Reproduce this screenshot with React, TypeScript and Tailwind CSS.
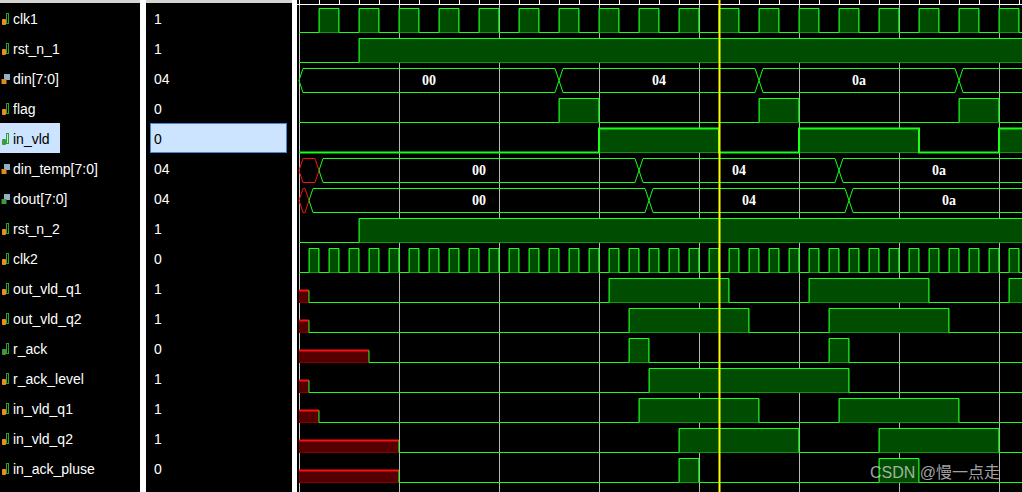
import React from "react";

type Row = {
  name: string;
  value: string;
  bus?: boolean;
  highs?: number[][];
  red?: number;
  redHex?: number;
  cuts?: number[];
  labels?: string[];
  thick?: boolean;
};

const clk = (start: number, period: number, w: number) => {
  const out: number[][] = [];
  for (let x = start; x < 1030; x += period) out.push([x, x + w]);
  return out;
};

const rows: Row[] = [
  { name: "clk1", value: "1", highs: clk(319, 40, 20) },
  { name: "rst_n_1", value: "1", highs: [[359, 1030]] },
  { name: "din[7:0]", value: "04", bus: true, cuts: [299, 559, 759, 959, 1060], labels: ["00", "04", "0a", ""] },
  { name: "flag", value: "0", highs: [[559, 599], [759, 799], [959, 999]] },
  { name: "in_vld", value: "0", highs: [[599, 719], [799, 919], [999, 1030]], thick: true },
  { name: "din_temp[7:0]", value: "04", bus: true, redHex: 319, cuts: [319, 639, 839, 1039], labels: ["00", "04", "0a"] },
  { name: "dout[7:0]", value: "04", bus: true, redHex: 309, cuts: [309, 649, 849, 1049], labels: ["00", "04", "0a"] },
  { name: "rst_n_2", value: "1", highs: [[359, 1030]] },
  { name: "clk2", value: "0", highs: clk(309, 20, 10) },
  { name: "out_vld_q1", value: "1", red: 309, highs: [[609, 729], [809, 929], [1009, 1030]] },
  { name: "out_vld_q2", value: "1", red: 309, highs: [[629, 749], [829, 949]] },
  { name: "r_ack", value: "0", red: 369, highs: [[629, 649], [829, 849]] },
  { name: "r_ack_level", value: "1", red: 309, highs: [[649, 849]] },
  { name: "in_vld_q1", value: "1", red: 319, highs: [[639, 759], [839, 959]] },
  { name: "in_vld_q2", value: "1", red: 399, highs: [[679, 799], [879, 999]] },
  { name: "in_ack_pluse", value: "0", red: 399, highs: [[679, 699], [879, 919]] },
];

const G = "#19ff19";

const SigIcon = ({ bus, green }: { bus?: boolean; green?: boolean }) => (
  <svg width="10" height="14" viewBox="0 0 10 14" className="shrink-0">
    {bus ? (
      <>
        <rect x="3" y="2" width="6" height="6" fill="#8fb0c8" />
        <rect x="0.5" y="7" width="5" height="5" fill={green ? "#3f9a3f" : "#e08a1c"} />
      </>
    ) : (
      <>
        <rect x="5.5" y="1.5" width="2" height="10" fill="none" stroke="#2aa52a" />
        <rect x="1" y="7" width="4" height="6" rx="1" fill={green ? "#3f9a3f" : "#e8901c"} />
      </>
    )}
  </svg>
);

const BitWave = ({ r, i }: { r: Row; i: number }) => {
  const hi = 8.5 + 30 * i;
  const lo = 32.5 + 30 * i;
  const mid = 20.5 + 30 * i;
  const start = r.red ?? 299;
  let d = `M${start} ${r.red ? mid : lo}`;
  if (r.red) d += ` L${start} ${lo}`;
  for (const [a, b] of r.highs ?? []) {
    d += ` L${a} ${lo} L${a} ${hi} L${b} ${hi} L${b} ${lo}`;
  }
  d += ` L1030 ${lo}`;
  return (
    <g>
      {r.red && (
        <>
          <rect x={299.5} y={mid} width={start - 300} height={lo - mid} fill="#550000" stroke="#8a0000" />
          <line x1={299} y1={mid} x2={start} y2={mid} stroke="#ff1010" strokeWidth={2} />
        </>
      )}
      {(r.highs ?? []).map(([a, b], k) => (
        <rect key={k} x={a + 0.5} y={hi} width={b - a - 1} height={lo - hi} fill="#004c00" stroke="#0a9a0a" />
      ))}
      <path d={d} fill="none" stroke={G} strokeWidth={r.thick ? 2 : 1} />
    </g>
  );
};

const BusWave = ({ r, i }: { r: Row; i: number }) => {
  const hi = 8.5 + 30 * i;
  const lo = 32.5 + 30 * i;
  const mid = 20.5 + 30 * i;
  const cuts = r.cuts ?? [];
  const hex = (a: number, b: number) =>
    `M${a} ${mid} L${a + 4} ${hi} L${b - 4} ${hi} L${b} ${mid} L${b - 4} ${lo} L${a + 4} ${lo} Z`;
  return (
    <g>
      {r.redHex && <path d={hex(299, r.redHex)} fill="none" stroke="#ff1010" />}
      {cuts.slice(0, -1).map((a, k) => (
        <g key={k}>
          <path d={hex(a, cuts[k + 1])} fill="none" stroke={G} />
          {r.labels?.[k] && (
            <text
              x={(a + cuts[k + 1]) / 2}
              y={mid + 4.5}
              textAnchor="middle"
              fill="#ffffff"
              fontSize="14"
              fontWeight="bold"
              fontFamily="'Liberation Serif', 'DejaVu Serif', serif"
            >
              {r.labels[k]}
            </text>
          )}
        </g>
      ))}
    </g>
  );
};

const Waves = () => {
  const ticks: number[] = [];
  for (let x = 299; x < 1022; x += 20) ticks.push(x);
  const grid = [399, 499, 599, 699, 799, 899, 999];
  return (
    <svg width="725" height="492" viewBox="297 0 725 492" className="block">
      <rect x="297" y="0" width="725" height="492" fill="#000" />
      <line x1="297" y1="4.5" x2="1022" y2="4.5" stroke="#ffffff" />
      {ticks.map((x) => (
        <line key={x} x1={x + 0.5} y1="0" x2={x + 0.5} y2="4" stroke="#ffffff" />
      ))}
      <line x1="299.5" y1="5" x2="299.5" y2="492" stroke="#c8c8c8" />
      {grid.map((x) => (
        <line key={x} x1={x + 0.5} y1="5" x2={x + 0.5} y2="492" stroke="#b8b8b8" />
      ))}
      {rows.map((r, i) => (r.bus ? <BusWave key={i} r={r} i={i} /> : <BitWave key={i} r={r} i={i} />))}
      <rect x="718.5" y="0" width="2" height="492" fill="#ffff00" />
    </svg>
  );
};

export default function App() {
  return (
    <div className="relative w-[1022px] h-[492px] overflow-hidden bg-black flex font-['Liberation_Sans',Arial,sans-serif] text-[14px] text-white">
      {/* names */}
      <div className="w-[140px] flex flex-col">
        <div className="h-[3px] bg-[#d4d4d4]" />
        {rows.map((r, i) => (
          <div key={r.name} className="h-[30px] flex items-center pt-[2px]">
            <div
              className={
                r.thick
                  ? "h-[30px] -mt-[2px] pt-[2px] flex items-center gap-[2px] pl-[1px] pr-[2px] w-[60px] bg-[#cce4ff] text-black"
                  : "flex items-center gap-[2px] pl-[1px]"
              }
            >
              <SigIcon bus={r.bus} green={i === 4 || i === 6 || i === 11} />
              <span>{r.name}</span>
            </div>
          </div>
        ))}
      </div>
      <div className="w-[6px] bg-white" />
      {/* values */}
      <div className="w-[146px] flex flex-col">
        <div className="h-[3px] bg-[#d4d4d4]" />
        {rows.map((r) => (
          <div key={r.name} className="h-[30px] flex items-center pt-[2px]">
            {r.thick ? (
              <div className="ml-[4px] -mt-[2px] w-[137px] h-[30px] flex items-center pl-[3px] pt-[2px] bg-[#cce4ff] border border-[#3d8bd6] text-black">
                {r.value}
              </div>
            ) : (
              <span className="pl-[8px]">{r.value}</span>
            )}
          </div>
        ))}
      </div>
      <div className="w-[5px] bg-white" />
      <Waves />
      <div className="absolute left-[870px] top-[461px] text-[16px] text-[#cfcfcf]/80 font-['Liberation_Sans','Noto_Sans_CJK_SC',sans-serif]">
        CSDN @慢一点走
      </div>
    </div>
  );
}
